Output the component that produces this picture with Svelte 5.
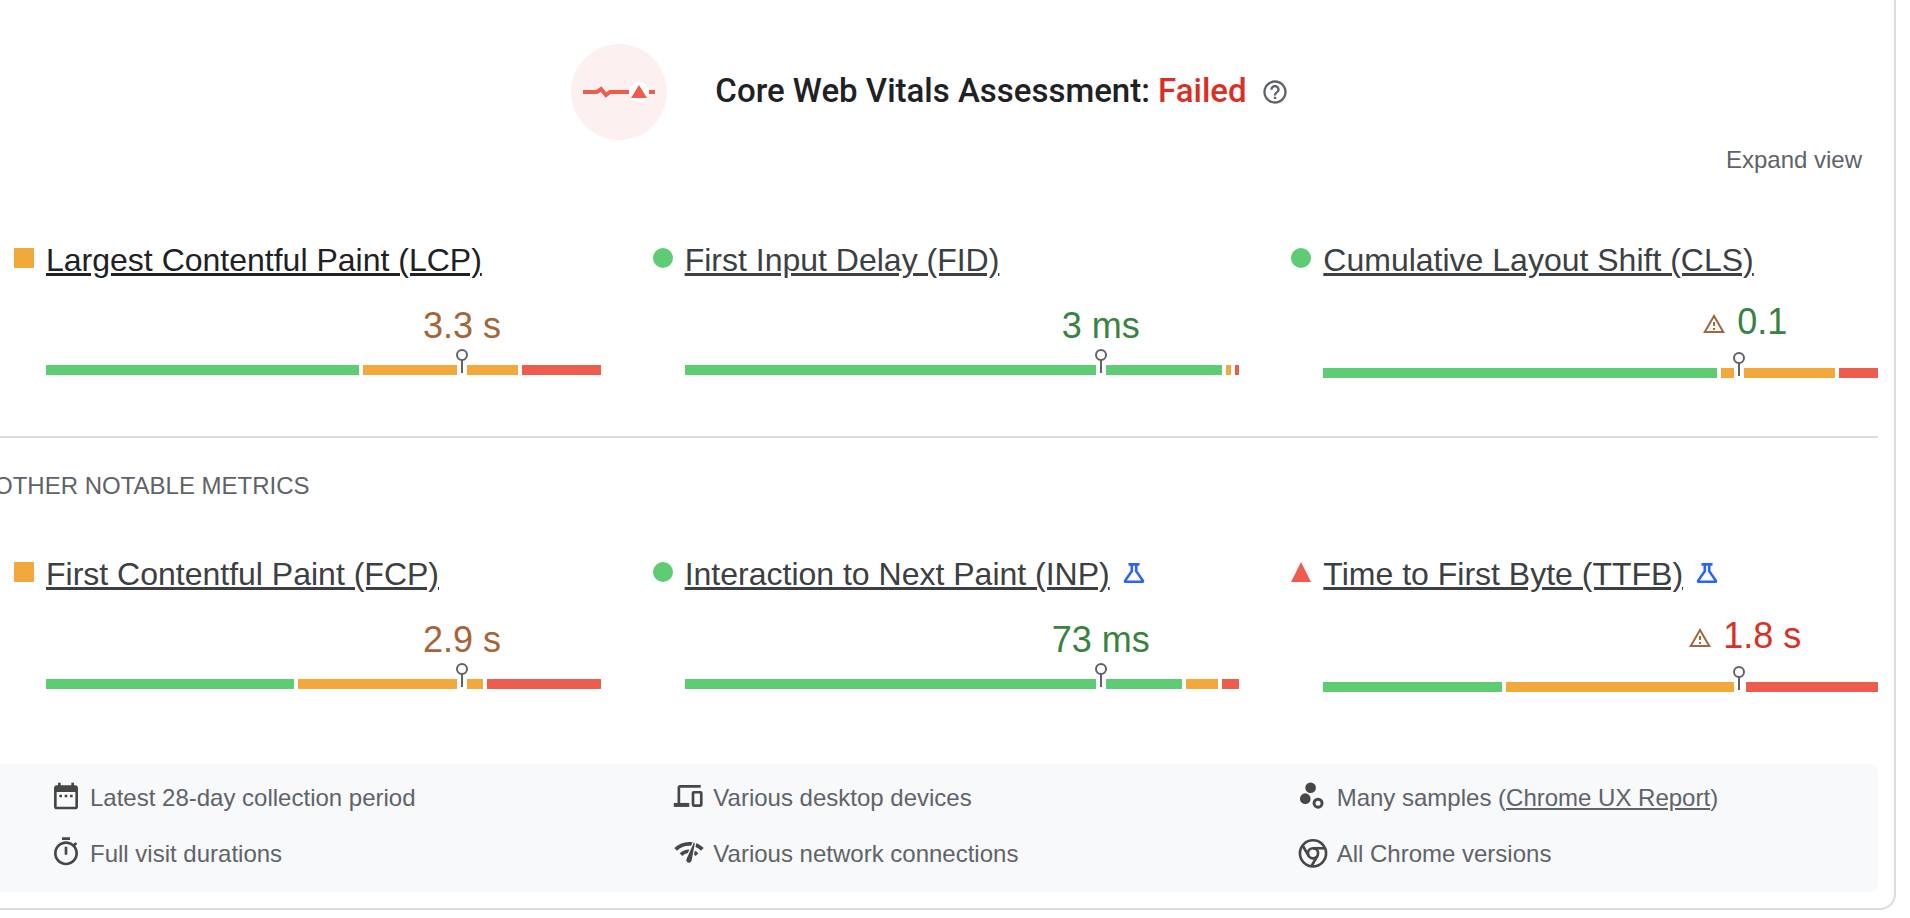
<script lang="ts">
  type Rating = 'good' | 'average' | 'poor';

  interface Metric {
    name: string;
    value: string;
    rating: Rating;
    split: [number, number, number];
    active?: boolean;
    flagged?: boolean;
    experimental?: boolean;
  }

  const ratings: Rating[] = ['good', 'average', 'poor'];

  const coreMetrics: Metric[] = [
    { name: 'Largest Contentful Paint (LCP)', value: '3.3 s', rating: 'average', split: [313, 155, 79], active: true },
    { name: 'First Input Delay (FID)', value: '3 ms', rating: 'good', split: [538, 5, 4] },
    { name: 'Cumulative Layout Shift (CLS)', value: '0.1', rating: 'good', split: [394, 114, 39], flagged: true },
  ];

  const otherMetrics: Metric[] = [
    { name: 'First Contentful Paint (FCP)', value: '2.9 s', rating: 'average', split: [248, 185, 114] },
    { name: 'Interaction to Next Paint (INP)', value: '73 ms', rating: 'good', split: [498, 32, 17], experimental: true },
    { name: 'Time to First Byte (TTFB)', value: '1.8 s', rating: 'poor', split: [179, 236, 132], flagged: true, experimental: true },
  ];
</script>

{#snippet metricCard(metric: Metric)}
  <div class="metric">
    <div class="metric-title">
      <svg class="shape {metric.rating}" viewBox="0 0 20 20" aria-hidden="true">
        {#if metric.rating === 'good'}
          <circle cx="10" cy="10" r="10" />
        {:else if metric.rating === 'average'}
          <rect width="20" height="20" />
        {:else}
          <path d="M10 0l10 20H0z" />
        {/if}
      </svg>
      <a href="#metric" class:active={metric.active}>{metric.name}</a>
      {#if metric.experimental}
        <svg class="flask" viewBox="0 0 24 24" aria-hidden="true">
          <path d="M6.5 2.4h11M9.8 2.4v6.8L3.2 18.6q-.6 1.2.8 1.2h16q1.4 0 .8-1.2L14.2 9.2V2.4" />
        </svg>
      {/if}
    </div>
    <div class="metric-body" class:flagged={metric.flagged}>
      <div class="value-track">
        <div class="value {metric.rating}">
          {#if metric.flagged}
            <svg class="warning" viewBox="0 0 24 24" aria-hidden="true">
              <path d="M12 5.99L19.53 19H4.47L12 5.99M12 2L1 21h22L12 2zm1 14h-2v2h2v-2zm0-6h-2v4h2v-4z" />
            </svg>
          {/if}
          <span>{metric.value}</span>
        </div>
      </div>
      <div class="bar">
        {#each metric.split as share, i}
          <div class="segment {ratings[i]}" style="flex-grow: {share}"></div>
        {/each}
        <div class="pin">
          <svg viewBox="0 0 12 24" aria-hidden="true">
            <circle cx="6" cy="6" r="5" />
            <path d="M6 11v13" />
          </svg>
        </div>
      </div>
    </div>
  </div>
{/snippet}

<main class="card">
  <header>
    <svg class="badge" viewBox="0 0 96 96" aria-hidden="true">
      <circle cx="48" cy="48" r="48" fill="#fdf0f0" />
      <path d="M12 48h14l4-3 5 6 4-3h19M78 48h6" fill="none" stroke="#ed5c4d" stroke-width="4" />
      <circle cx="68" cy="48" r="10" fill="#fff" />
      <path d="M68 41l8 13H60z" fill="#ed5c4d" />
    </svg>
    <h1>Core Web Vitals Assessment: <span>Failed</span></h1>
    <button class="help" aria-label="About this assessment">
      <svg viewBox="0 0 24 24" aria-hidden="true">
        <path d="M11 18h2v-2h-2v2zm1-16C6.48 2 2 6.48 2 12s4.48 10 10 10 10-4.48 10-10S17.52 2 12 2zm0 18c-4.41 0-8-3.59-8-8s3.59-8 8-8 8 3.59 8 8-3.59 8-8 8zm0-14c-2.21 0-4 1.79-4 4h2c0-1.1.9-2 2-2s2 .9 2 2c0 2-3 1.75-3 5h2c0-2.25 3-2.5 3-5 0-2.21-1.79-4-4-4z" />
      </svg>
    </button>
  </header>

  <div class="toolbar">
    <button class="expand">Expand view</button>
  </div>

  <section class="metrics core">
    {#each coreMetrics as metric}
      {@render metricCard(metric)}
    {/each}
  </section>

  <h2>OTHER NOTABLE METRICS</h2>

  <section class="metrics other">
    {#each otherMetrics as metric}
      {@render metricCard(metric)}
    {/each}
  </section>

  <footer>
    <div class="fact">
      <svg viewBox="0 0 24 24" aria-hidden="true">
        <path d="M9 11H7v2h2v-2zm4 0h-2v2h2v-2zm4 0h-2v2h2v-2zm2-7h-1V2h-2v2H8V2H6v2H5c-1.11 0-1.99.9-1.99 2L3 20c0 1.1.89 2 2 2h14c1.1 0 2-.9 2-2V6c0-1.1-.9-2-2-2zm0 16H5V9h14v11z" />
      </svg>
      <span>Latest 28-day collection period</span>
    </div>
    <div class="fact">
      <svg class="outline" viewBox="0 0 24 24" aria-hidden="true">
        <path d="M20.8 4.8H5.4Q4.4 4.8 4.4 5.8V18" />
        <path d="M.6 18.7h11.6" stroke-width="3" />
        <rect x="15" y="9.2" width="6.2" height="10" rx=".6" />
      </svg>
      <span>Various desktop devices</span>
    </div>
    <div class="fact">
      <svg viewBox="0 0 24 24" aria-hidden="true">
        <circle cx="10.2" cy="5.8" r="4" />
        <circle cx="6.2" cy="14" r="4" />
        <circle cx="15.8" cy="17.4" r="3" fill="none" stroke="#474747" stroke-width="2.2" />
      </svg>
      <span>Many samples (<a href="#crux">Chrome UX Report</a>)</span>
    </div>
    <div class="fact">
      <svg viewBox="0 0 24 24" aria-hidden="true">
        <path d="M15 1H9v2h6V1zm-4 13h2V8h-2v6zm8.03-6.61l1.42-1.42c-.43-.51-.9-.99-1.41-1.41l-1.42 1.42C16.07 4.74 14.12 4 12 4c-4.97 0-9 4.03-9 9s4.02 9 9 9 9-4.03 9-9c0-2.12-.74-4.07-1.97-5.61zM12 20c-3.87 0-7-3.13-7-7s3.13-7 7-7 7 3.13 7 7-3.13 7-7 7z" />
      </svg>
      <span>Full visit durations</span>
    </div>
    <div class="fact">
      <svg viewBox="0 0 24 24" aria-hidden="true">
        <path d="M15.9 5c-.17 0-.32.09-.41.23l-.07.15-5.18 11.65c-.16.29-.26.61-.26.96 0 1.11.9 2.01 2.01 2.01.96 0 1.77-.68 1.96-1.59l.01-.03L16.4 5.5c0-.28-.22-.5-.5-.5zM1 9l2 2c2.88-2.88 6.79-4.08 10.53-3.62l1.19-2.68C9.89 3.84 4.74 5.27 1 9zm20 2l2-2c-1.64-1.64-3.55-2.82-5.59-3.57l-.53 2.82c1.5.62 2.9 1.53 4.12 2.75zm-4 4l2-2c-.8-.8-1.7-1.42-2.66-1.89l-.55 2.92c.42.27.83.59 1.21.97zM5 13l2 2c1.13-1.13 2.56-1.79 4.03-2l1.28-2.88c-2.63-.08-5.3.87-7.31 2.88z" />
      </svg>
      <span>Various network connections</span>
    </div>
    <div class="fact">
      <svg class="outline" viewBox="0 0 24 24" aria-hidden="true">
        <circle cx="12" cy="13" r="9.8" />
        <circle cx="12" cy="13" r="3.8" />
        <path d="M12 9.2h9" />
        <path d="M12 9.2h9" transform="rotate(120 12 13)" />
        <path d="M12 9.2h9" transform="rotate(240 12 13)" />
      </svg>
      <span>All Chrome versions</span>
    </div>
  </footer>
</main>

<style>
  :global(body) {
    margin: 0;
    background: #fff;
    overflow-x: hidden;
  }

  .card {
    margin: 0 14px 0 -24px;
    padding: 44px 16px 16px;
    border: 2px solid #dadce0;
    border-top: none;
    border-radius: 0 0 16px 16px;
    font-family: 'Liberation Sans', Arial, sans-serif;
    font-size: 24px;
    line-height: 32px;
    color: #5f6368;
  }

  button {
    padding: 0;
    border: none;
    background: none;
    font: inherit;
    color: inherit;
    cursor: pointer;
  }

  header {
    display: flex;
    align-items: center;
    justify-content: center;
    padding-right: 12px;
  }

  .badge {
    width: 96px;
    height: 96px;
    margin-right: 48px;
  }

  h1 {
    margin: 0;
    padding-bottom: 2px;
    font-family: Roboto, sans-serif;
    font-size: 33px;
    font-weight: 500;
    line-height: 40px;
    color: #202124;
  }

  h1 span {
    color: #d93025;
  }

  .help {
    height: 28px;
    margin-left: 14px;
  }

  .help svg {
    display: block;
    width: 28px;
    height: 28px;
    fill: #5f6368;
  }

  .toolbar {
    display: flex;
    justify-content: flex-end;
    padding-right: 16px;
  }

  .expand {
    height: 40px;
  }

  .metrics {
    display: grid;
    grid-template-columns: repeat(3, 1fr);
    column-gap: 52px;
    padding-left: 20px;
  }

  .core {
    margin-top: 60px;
    padding-bottom: 58px;
  }

  .other {
    padding-bottom: 72px;
  }

  .metric-title {
    display: flex;
    align-items: center;
    gap: 12px;
    font-size: 32px;
    line-height: 40px;
    white-space: nowrap;
  }

  .metric-title a {
    color: #3c4043;
  }

  .metric-title a.active {
    color: #202124;
  }

  .shape {
    width: 20px;
    height: 20px;
    margin-bottom: 4px;
  }

  .shape.good {
    fill: #5ecb75;
  }

  .shape.average {
    fill: #f3a83b;
  }

  .shape.poor {
    fill: #ed5c4d;
  }

  .flask {
    width: 24px;
    height: 24px;
    fill: none;
    stroke: #2962ff;
    stroke-width: 2.6;
  }

  .metric-body {
    padding: 26px 0 0 32px;
  }

  .value-track {
    display: flex;
    justify-content: center;
    /* centres the value on the 75th percentile */
    margin-left: 50%;
    margin-bottom: 19px;
  }

  .value {
    display: flex;
    align-items: center;
    font-size: 36px;
    line-height: 40px;
    white-space: nowrap;
  }

  .value.good {
    color: #37833f;
  }

  .value.average {
    color: #a5653a;
  }

  .value.poor {
    color: #d93025;
  }

  .flagged {
    padding-top: 22px;
  }

  .flagged .value-track {
    margin-bottom: 26px;
  }

  .warning {
    width: 24px;
    height: 24px;
    margin: 4px 11px 0;
    fill: #a5653a;
  }

  .bar {
    position: relative;
    display: flex;
    gap: 4px;
    height: 10px;
  }

  .segment {
    flex: 0 0 0;
  }

  .segment.good {
    background: #5ecb75;
  }

  .segment.average {
    background: #f3a83b;
  }

  .segment.poor {
    background: #ed5c4d;
  }

  .pin {
    position: absolute;
    left: 75%;
    bottom: 0;
    width: 10px;
    height: 10px;
    margin-left: -5px;
    background: #fff;
  }

  .pin svg {
    position: absolute;
    left: -1px;
    bottom: 2px;
    width: 12px;
    height: 24px;
    fill: #fff;
    stroke: #5f6368;
    stroke-width: 2;
  }

  h2 {
    margin: 0 0 52px;
    padding-top: 32px;
    border-top: 2px solid #dadce0;
    font-size: 24px;
    font-weight: 400;
    line-height: 32px;
  }

  footer {
    display: grid;
    grid-template-columns: repeat(3, 1fr);
    gap: 20px 42px;
    padding: 16px 0 20px 56px;
    border-radius: 8px;
    background: #f8f9fb;
  }

  .fact {
    display: flex;
    gap: 8px;
    line-height: 36px;
    white-space: nowrap;
  }

  .fact svg {
    width: 32px;
    height: 32px;
    fill: #474747;
  }

  .fact .outline {
    fill: none;
    stroke: #474747;
    stroke-width: 2;
  }

  .fact a {
    color: inherit;
  }
</style>
